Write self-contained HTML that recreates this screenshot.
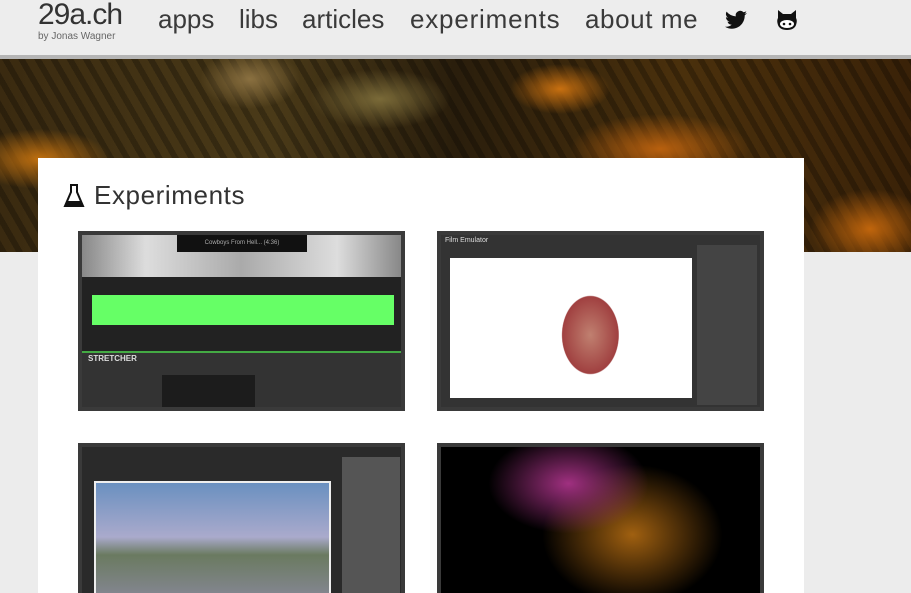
<!DOCTYPE html>
<html><head><meta charset="utf-8"><style>
html,body{margin:0;width:911px;height:593px;overflow:hidden}
body{background:#ececec;font-family:"Liberation Sans",sans-serif;position:relative}
.hdr{position:absolute;left:0;top:0;width:911px;height:55px;background:#ededed;border-bottom:4px solid #b5b5b5}
.logo{position:absolute;left:38px;top:-2px;font-size:30px;color:#333;letter-spacing:-1px}
.by{position:absolute;left:38px;top:31px;font-size:10px;color:#666}
.nav{position:absolute;top:4px;font-size:26px;color:#3a3a3a}
.banner{position:absolute;left:0;top:59px;width:911px;height:193px;background:
radial-gradient(ellipse 60px 30px at 120px 150px,#e07a10,transparent),
radial-gradient(ellipse 70px 30px at 40px 100px,#c0700f,transparent),
radial-gradient(ellipse 90px 35px at 660px 90px,#b8600e,transparent),
radial-gradient(ellipse 60px 40px at 870px 170px,#c0650c,transparent),
radial-gradient(ellipse 50px 25px at 560px 30px,#c87010,transparent),
radial-gradient(ellipse 70px 30px at 380px 40px,#7a6a38,transparent),
radial-gradient(ellipse 40px 30px at 640px 130px,#d08020,transparent),
radial-gradient(ellipse 50px 30px at 250px 20px,#8a7040,transparent),
repeating-linear-gradient(60deg,rgba(0,0,0,.25) 0 6px,transparent 6px 14px),
linear-gradient(90deg,#3a2a10,#4a3a18 30%,#2a1e0c 50%,#4a300c 75%,#3a2208);}
.card{position:absolute;left:38px;top:158px;width:766px;height:435px;background:#fff}
h1{position:absolute;left:94px;top:180px;margin:0;font-size:26px;font-weight:normal;color:#333;letter-spacing:0.6px}
.t{position:absolute;background:#2a2a2a;border:4px solid #3a3a3a;box-sizing:border-box;overflow:hidden}
</style></head><body>
<div class="hdr">
<div class="logo">29a.ch</div><div class="by">by Jonas Wagner</div>
<span class="nav" style="left:158px">apps</span>
<span class="nav" style="left:239px">libs</span>
<span class="nav" style="left:302px">articles</span>
<span class="nav" style="left:410px;letter-spacing:0.8px">experiments</span>
<span class="nav" style="left:585px;letter-spacing:0.6px">about me</span>
<svg style="position:absolute;left:725px;top:10px" width="22" height="20" viewBox="0 0 24 20"><path d="M24 2.4a10 10 0 0 1-2.8.8A5 5 0 0 0 23.3.4a10 10 0 0 1-3.1 1.2A4.9 4.9 0 0 0 11.8 6 14 14 0 0 1 1.7.9a4.9 4.9 0 0 0 1.5 6.6A5 5 0 0 1 1 6.9a4.9 4.9 0 0 0 3.9 4.8 5 5 0 0 1-2.2.1 4.9 4.9 0 0 0 4.6 3.4A9.9 9.9 0 0 1 0 17.3 14 14 0 0 0 7.5 19.5c9 0 14-7.5 14-14v-.6A10 10 0 0 0 24 2.4z" fill="#111"/></svg>
<svg style="position:absolute;left:775px;top:8px" width="24" height="24" viewBox="0 0 24 24"><path d="M3 2l5 4h8l5-4v8c1 2 1 4 0 7-1 3-4 5-9 5s-8-2-9-5c-1-3-1-5 0-7z" fill="#111"/><ellipse cx="12" cy="16" rx="7" ry="4" fill="#fff"/><circle cx="9" cy="16" r="1.3" fill="#111"/><circle cx="15" cy="16" r="1.3" fill="#111"/></svg>
</div>
<div class="banner"></div>
<div class="card"></div>
<svg style="position:absolute;left:63px;top:184px" width="22" height="24" viewBox="0 0 22 24"><path d="M7 1h8M8 1v7L2 22h18L14 8V1" fill="none" stroke="#111" stroke-width="2"/><path d="M4 17h14l2 5H2z" fill="#111"/></svg>
<h1>Experiments</h1>
<div class="t" style="left:78px;top:231px;width:327px;height:180px;background:#222">
<div style="position:absolute;left:0;top:0;width:319px;height:42px;background:linear-gradient(90deg,#888,#ddd 20%,#aaa 50%,#ddd 80%,#888)"></div>
<div style="position:absolute;left:95px;top:0;width:130px;height:17px;background:#111;color:#aaa;font-size:6px;text-align:center;line-height:17px">Cowboys From Hell... (4:36)</div>
<div style="position:absolute;left:2px;top:52px;width:318px;height:46px;background:linear-gradient(#6f6,#6f6) 8px 8px/302px 30px no-repeat;"></div>
<div style="position:absolute;left:0;top:116px;width:319px;height:56px;background:#333;border-top:2px solid #4a4"></div>
<div style="position:absolute;left:6px;top:119px;color:#ddd;font-size:8px;font-weight:bold">STRETCHER</div>
<div style="position:absolute;left:80px;top:140px;width:93px;height:32px;background:#1c1c1c"></div>
</div>
<div class="t" style="left:437px;top:231px;width:327px;height:180px;background:#333">
<div style="position:absolute;left:9px;top:23px;width:242px;height:140px;background:radial-gradient(ellipse 40px 55px at 58% 55%,#c08070,#a04040 70%,#fff 72%)"></div>
<div style="position:absolute;left:4px;top:2px;color:#ddd;font-size:7px">Film Emulator</div>
<div style="position:absolute;left:256px;top:10px;width:60px;height:160px;background:#444"></div>
</div>
<div class="t" style="left:78px;top:443px;width:327px;height:150px;border-bottom:0;background:#2a2a2a">
<div style="position:absolute;left:12px;top:34px;width:233px;height:120px;border:2px solid #eee;background:linear-gradient(#6a90c0,#aac 45%,#6a7a60 60%,#889)"></div>
<div style="position:absolute;left:260px;top:10px;width:58px;height:150px;background:#555"></div>
</div>
<div class="t" style="left:437px;top:443px;width:327px;height:150px;border-bottom:0;background:radial-gradient(ellipse 80px 50px at 40% 25%,#a03080,transparent),radial-gradient(ellipse 90px 70px at 60% 60%,#a06010,transparent),#000"></div>
</body></html>
